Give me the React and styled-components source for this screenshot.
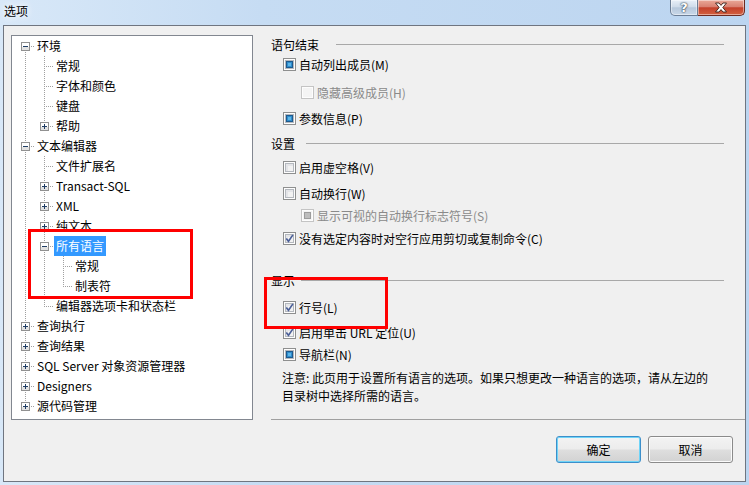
import React from 'react'
import styled, { createGlobalStyle } from 'styled-components'

const GlobalStyle = createGlobalStyle`
  html, body {
    margin: 0;
    padding: 0;
  }
  body {
    font-family: "Noto Sans CJK SC", "Noto Sans", sans-serif;
    font-size: 12px;
    background: #c4dbf3;
  }
`

const Window = styled.div`
  position: relative;
  width: 749px;
  height: 485px;
  display: flex;
  flex-direction: column;
  background: linear-gradient(90deg, #d8e8f8 0%, #c6dcf3 35%, #bcd5f0 100%);
  overflow: hidden;
`

const TitleBar = styled.div`
  height: 25px;
  display: flex;
  align-items: flex-start;
  padding: 0 4px;
`

const Title = styled.div`
  flex: 1;
  padding-top: 1px;
  line-height: 20px;
  color: #000;
  text-shadow: 0 0 6px #fff, 0 0 10px rgba(255, 255, 255, 0.9);
`

const CaptionButton = styled.div`
  width: ${p => p.$w}px;
  height: 16px;
  box-sizing: border-box;
  display: flex;
  align-items: center;
  justify-content: center;
  border: 1px solid ${p => (p.$close ? '#6e2a20' : '#6c7e96')};
  border-top: none;
  border-left-width: ${p => (p.$close ? 0 : 1)}px;
  border-radius: ${p => (p.$close ? '0 0 5px 0' : '0 0 0 5px')};
  background: ${p =>
    p.$close
      ? 'linear-gradient(#eaa898 0%, #d98172 45%, #c4412c 52%, #d2603f 100%)'
      : 'linear-gradient(#e8eff8 0%, #d0dcea 45%, #b7c8dc 52%, #c8d7e8 100%)'};
  box-shadow: inset 0 0 0 1px rgba(255, 255, 255, 0.45);
  color: #fff;
  font: bold 13px "DejaVu Sans", sans-serif;
  text-shadow: 0 0 1px #1c2a3a, 0 0 2px #1c2a3a;
`

const Client = styled.div`
  flex: 1;
  margin: 0 3px 3px 3px;
  border: 1px solid #6f7580;
  background: #f0f0f0;
  display: flex;
  flex-direction: column;
  padding: 9px 0 0 7px;
`

const Main = styled.div`
  display: flex;
  height: 385px;
`

const TreeBox = styled.div`
  width: 242px;
  box-sizing: border-box;
  border: 1px solid #828790;
  background: #fff;
  padding-left: 4px;
`

const TreeRow = styled.div`
  display: flex;
  align-items: center;
  height: 20px;
`

const Cell = styled.svg`
  display: block;
  flex: none;
`

const TreeLabel = styled.span`
  height: 20px;
  line-height: 20px;
  padding: 0 2px;
  white-space: nowrap;
  background: ${p => (p.$selected ? '#3399ff' : 'transparent')};
  color: ${p => (p.$selected ? '#fff' : '#000')};
`

const Panel = styled.div`
  flex: 1;
  margin-left: 18px;
  padding-right: 21px;
  box-sizing: border-box;
  border-bottom: 1px solid #a0a0a0;
`

const Section = styled.div`
  display: flex;
  align-items: center;
  height: 18px;
  margin-top: ${p => p.$mt}px;
  color: #000;

  &::after {
    content: '';
    flex: 1;
    height: 1px;
    margin-left: ${p => p.$gap}px;
    background: #a8a8a8;
  }
`

const OptionRow = styled.label`
  display: flex;
  align-items: center;
  gap: 3px;
  height: 20px;
  margin-top: ${p => p.$mt}px;
  padding-left: ${p => p.$indent}px;
  color: ${p => (p.$disabled ? '#8a8a8a' : '#000')};
  white-space: nowrap;
`

const Box = styled.svg`
  display: block;
  flex: none;
`

const Note = styled.div`
  margin-top: 5px;
  padding-left: 11px;
  line-height: 18px;
  white-space: nowrap;
`

const Footer = styled.div`
  display: flex;
  justify-content: flex-end;
  gap: 7px;
  padding: 16px 12px 0 0;
`

const Button = styled.button`
  width: 85px;
  height: 27px;
  box-sizing: border-box;
  padding: 0;
  border: 1px solid ${p => (p.$default ? '#3c8fca' : '#8a8a8a')};
  border-radius: 3px;
  background: linear-gradient(#f3f3f3 0%, #ececec 48%, #dedede 52%, #d2d2d2 100%);
  box-shadow: inset 0 0 0 1px ${p => (p.$default ? '#6fd4f8' : '#fbfbfb')};
  font: 12px "Noto Sans CJK SC", sans-serif;
  color: #000;
`

const Marker = styled.div`
  position: absolute;
  left: ${p => p.$x}px;
  top: ${p => p.$y}px;
  width: ${p => p.$w}px;
  height: ${p => p.$h}px;
  box-sizing: border-box;
  border: 3px solid #ff0000;
  pointer-events: none;
`

const tree = [
  {
    label: '环境',
    children: [
      { label: '常规' },
      { label: '字体和颜色' },
      { label: '键盘' },
      { label: '帮助', closed: true },
    ],
  },
  {
    label: '文本编辑器',
    children: [
      { label: '文件扩展名' },
      { label: 'Transact-SQL', closed: true },
      { label: 'XML', closed: true },
      { label: '纯文本', closed: true },
      {
        label: '所有语言',
        selected: true,
        children: [{ label: '常规' }, { label: '制表符' }],
      },
      { label: '编辑器选项卡和状态栏' },
    ],
  },
  { label: '查询执行', closed: true },
  { label: '查询结果', closed: true },
  { label: 'SQL Server 对象资源管理器', closed: true },
  { label: 'Designers', closed: true },
  { label: '源代码管理', closed: true },
]

const flatten = (nodes, guides = [], out = []) => {
  nodes.forEach((n, i) => {
    const hasNext = i < nodes.length - 1
    out.push({ ...n, guides, hasNext, first: guides.length === 0 && i === 0 })
    if (n.children) flatten(n.children, [...guides, hasNext], out)
  })
  return out
}

const dots = (x0, y0, x1, y1) => {
  const out = []
  if (x0 === x1) {
    for (let y = y0; y <= y1; y += 2) out.push(<rect key={`v${y}`} x={x0} y={y} width="1" height="1" />)
  } else {
    for (let x = x0; x <= x1; x += 2) out.push(<rect key={`h${x}`} x={x} y={y0} width="1" height="1" />)
  }
  return out
}

function TreeCell({ full, top, bottom, branch, box }) {
  return (
    <Cell width="19" height="20" viewBox="0 0 19 20">
      <g fill="#a0a0a0">
        {full && dots(9, 0, 9, 19)}
        {top && dots(9, 0, 9, 10)}
        {bottom && dots(9, 10, 9, 19)}
        {branch && dots(11, 10, 18, 10)}
      </g>
      {box && (
        <g shapeRendering="crispEdges">
          <rect x="5" y="6" width="9" height="9" fill="#919191" />
          <rect x="6" y="7" width="7" height="4" fill="#ffffff" />
          <rect x="6" y="11" width="7" height="3" fill="#e2e2e2" />
          <rect x="7" y="10" width="5" height="1" fill="#1f3d64" />
          {box === 'plus' && <rect x="9" y="8" width="1" height="5" fill="#1f3d64" />}
        </g>
      )}
    </Cell>
  )
}

function CheckBox({ state, disabled }) {
  const edge = disabled ? '#c4c4c4' : '#8e8f8f'
  return (
    <Box width="13" height="13" viewBox="0 0 13 13" shapeRendering="crispEdges">
      <rect x="0" y="0" width="13" height="13" fill={edge} />
      <rect x="1" y="1" width="11" height="11" fill="#fdfdfd" />
      {!disabled && (
        <>
          <rect x="2" y="2" width="9" height="9" fill="#b4b8be" />
          <rect x="3" y="3" width="7" height="7" fill="#e4e5e8" />
          <rect x="5" y="5" width="5" height="5" fill="#f2f2f2" />
        </>
      )}
      {disabled && <rect x="2" y="2" width="9" height="9" fill="#f4f4f4" />}
      {state === 'mixed' && !disabled && (
        <>
          <rect x="3" y="3" width="7" height="7" fill="#1d5a8e" />
          <rect x="4" y="4" width="5" height="5" fill="#2f8ccc" />
          <rect x="5" y="5" width="3" height="3" fill="#5cb6e8" />
        </>
      )}
      {state === 'mixed' && disabled && (
        <>
          <rect x="3" y="3" width="7" height="7" fill="#9c9c9c" />
          <rect x="4" y="4" width="5" height="5" fill="#bdbdbd" />
        </>
      )}
      {state === 'checked' && (
        <path
          d="M3.3 6.4 L5.5 9.3 L9.9 2.9"
          fill="none"
          stroke="#4b5f98"
          strokeWidth="1.6"
          shapeRendering="geometricPrecision"
        />
      )}
    </Box>
  )
}

function TreeItem({ item }) {
  const level = item.guides.length
  const box = item.children ? 'minus' : item.closed ? 'plus' : null
  return (
    <TreeRow>
      {item.guides.map((g, i) => (
        <TreeCell key={i} full={g} />
      ))}
      <TreeCell
        top={!(level === 0 && item.first)}
        bottom={item.hasNext}
        branch
        box={box}
      />
      <TreeLabel $selected={item.selected}>{item.label}</TreeLabel>
    </TreeRow>
  )
}

function Option({ label, state, disabled, indent = 12, mt = 0 }) {
  return (
    <OptionRow $indent={indent} $mt={mt} $disabled={disabled}>
      <CheckBox state={state} disabled={disabled} />
      <span>{label}</span>
    </OptionRow>
  )
}

export default function App() {
  const rows = flatten(tree)
  return (
    <>
      <GlobalStyle />
      <Window>
        <TitleBar>
          <Title>选项</Title>
          <CaptionButton $w={28}>?</CaptionButton>
          <CaptionButton $w={47} $close>
            <svg width="14" height="11" viewBox="0 0 14 11">
              <path
                d="M1.5 1 H5 L7 3.4 L9 1 H12.5 L8.8 5.5 L12.5 10 H9 L7 7.6 L5 10 H1.5 L5.2 5.5 Z"
                fill="#fff"
                stroke="#3b1f1a"
                strokeWidth="0.9"
                strokeLinejoin="round"
              />
            </svg>
          </CaptionButton>
        </TitleBar>
        <Client>
          <Main>
            <TreeBox>
              {rows.map((r, i) => (
                <TreeItem key={i} item={r} />
              ))}
            </TreeBox>
            <Panel>
              <Section $mt={0} $gap={17}>语句结束</Section>
              <Option label="自动列出成员(M)" state="mixed" mt={1} />
              <Option label="隐藏高级成员(H)" disabled indent={30} mt={8} />
              <Option label="参数信息(P)" state="mixed" mt={6} />

              <Section $mt={6} $gap={11}>设置</Section>
              <Option label="启用虚空格(V)" mt={5} />
              <Option label="自动换行(W)" mt={6} />
              <Option label="显示可视的自动换行标志符号(S)" state="mixed" disabled indent={30} mt={2} />
              <Option label="没有选定内容时对空行应用剪切或复制命令(C)" state="checked" mt={3} />

              <Section $mt={23} $gap={6}>显示</Section>
              <Option label="行号(L)" state="checked" mt={8} />
              <Option label="启用单击 URL 定位(U)" state="checked" mt={5} />
              <Option label="导航栏(N)" state="mixed" mt={2} />

              <Note>
                注意: 此页用于设置所有语言的选项。如果只想更改一种语言的选项，请从左边的
                <br />
                目录树中选择所需的语言。
              </Note>
            </Panel>
          </Main>
          <Footer>
            <Button $default>确定</Button>
            <Button>取消</Button>
          </Footer>
        </Client>
        <Marker $x={28} $y={229} $w={165} $h={70} />
        <Marker $x={264} $y={277} $w={124} $h={52} />
      </Window>
    </>
  )
}
